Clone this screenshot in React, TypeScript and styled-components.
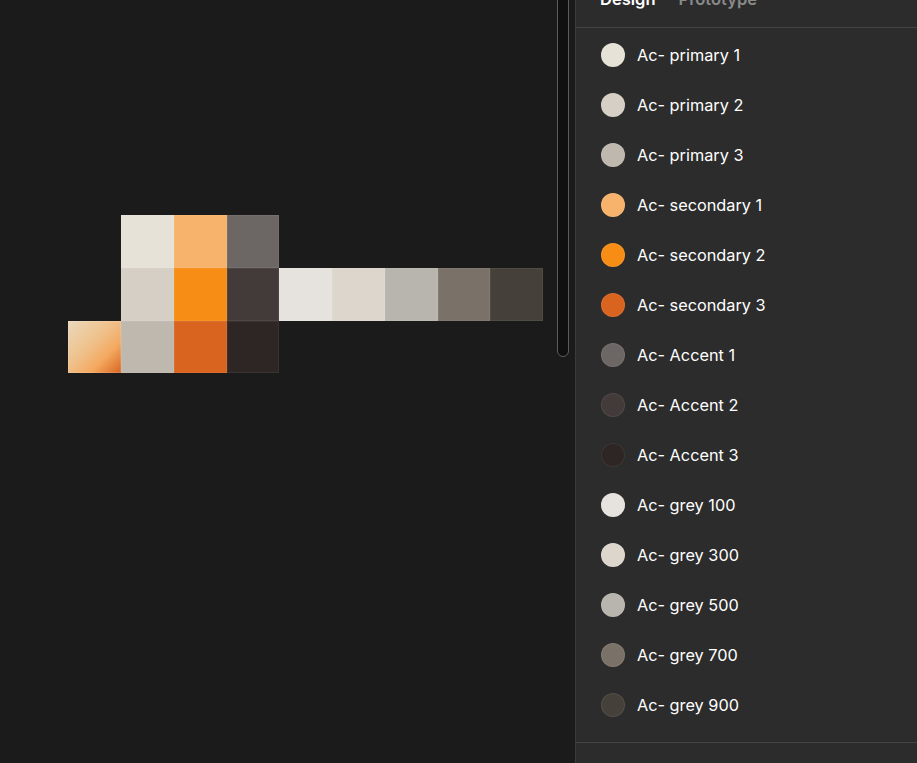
import React from "react";
import styled, { createGlobalStyle } from "styled-components";

const Global = createGlobalStyle`
  html, body { margin: 0; padding: 0; background: #1b1b1b; }
  body { font-family: Inter, "Noto Sans", sans-serif; overflow: hidden; }
  * { box-sizing: border-box; }
`;

const Page = styled.div`
  display: flex;
  width: 917px;
  height: 763px;
  overflow: hidden;
`;

const Canvas = styled.div`
  position: relative;
  width: 575px;
  flex: none;
  background: #1b1b1b;
  padding: 215px 0 0 68px;
`;

const Scroll = styled.div`
  position: absolute;
  left: 557px;
  top: -20px;
  width: 12px;
  height: 377px;
  border: 1px solid #5c5c5c;
  border-radius: 6px;
  background: #101010;
`;

const Grid = styled.div`
  display: grid;
  grid-template-columns: 53px 53px 53px 52px 53px 53px 53px 52px 53px;
  grid-template-rows: 53px 53px 52px;
`;

const Cell = styled.div<{ $c: string; $col: number; $row: number }>`
  grid-column: ${(p) => p.$col};
  grid-row: ${(p) => p.$row};
  background: ${(p) => p.$c};
  box-shadow: inset 0 0 0 1px rgba(255, 255, 255, 0.06);
`;

const GradientCell = styled.div`
  grid-column: 1;
  grid-row: 3;
  background: linear-gradient(135deg, #ead9bc 0%, #efc08a 45%, #f4a960 70%, #d8641f 100%);
  box-shadow: inset 0 0 0 1px rgba(255, 255, 255, 0.12);
`;

const Panel = styled.div`
  flex: 1;
  background: #2c2c2c;
  border-left: 1px solid #3b3b3b;
  display: flex;
  flex-direction: column;
`;

const Tabs = styled.div`
  height: 28px;
  border-bottom: 1px solid #444444;
  display: flex;
  gap: 23px;
  padding-left: 24px;
  align-items: flex-end;
  overflow: hidden;
`;

const Tab = styled.span<{ $active?: boolean }>`
  font-size: 16.5px;
  line-height: 20px;
  font-weight: 600;
  color: ${(p) => (p.$active ? "#ffffff" : "#8a8a8a")};
  margin-bottom: 18px;
`;

const List = styled.div`
  padding: 2px 0 12px;
  border-bottom: 1px solid #444444;
`;

const Row = styled.div`
  height: 50px;
  display: flex;
  align-items: center;
  padding-left: 25px;
  gap: 12px;
`;

const Dot = styled.div<{ $c: string }>`
  width: 24px;
  height: 24px;
  border-radius: 50%;
  background: ${(p) => p.$c};
  box-shadow: inset 0 0 0 1px rgba(255, 255, 255, 0.08);
  flex: none;
`;

const Label = styled.span`
  font-size: 16.3px;
  color: #ffffff;
`;

const styles: [string, string][] = [
  ["Ac- primary 1", "#e6e2d8"],
  ["Ac- primary 2", "#d6cfc6"],
  ["Ac- primary 3", "#bfb8ae"],
  ["Ac- secondary 1", "#f7b36b"],
  ["Ac- secondary 2", "#f78d15"],
  ["Ac- secondary 3", "#d8641f"],
  ["Ac- Accent 1", "#6c6764"],
  ["Ac- Accent 2", "#433b39"],
  ["Ac- Accent 3", "#2e2624"],
  ["Ac- grey 100", "#e6e3df"],
  ["Ac- grey 300", "#ddd6cc"],
  ["Ac- grey 500", "#b8b5ae"],
  ["Ac- grey 700", "#7a7168"],
  ["Ac- grey 900", "#45413a"],
];

const cells: [string, number, number][] = [
  ["#e6e2d8", 2, 1],
  ["#f7b36b", 3, 1],
  ["#6c6764", 4, 1],
  ["#d6cfc6", 2, 2],
  ["#f78d15", 3, 2],
  ["#433b39", 4, 2],
  ["#e6e3df", 5, 2],
  ["#ddd6cc", 6, 2],
  ["#b8b5ae", 7, 2],
  ["#7a7168", 8, 2],
  ["#45413a", 9, 2],
  ["#bfb8ae", 2, 3],
  ["#d8641f", 3, 3],
  ["#2e2624", 4, 3],
];

export default function App() {
  return (
    <Page>
      <Global />
      <Canvas>
        <Grid>
          {cells.map(([c, col, row]) => (
            <Cell key={c + col + row} $c={c} $col={col} $row={row} />
          ))}
          <GradientCell />
        </Grid>
        <Scroll />
      </Canvas>
      <Panel>
        <Tabs>
          <Tab $active>Design</Tab>
          <Tab>Prototype</Tab>
        </Tabs>
        <List>
          {styles.map(([name, c]) => (
            <Row key={name}>
              <Dot $c={c} />
              <Label>{name}</Label>
            </Row>
          ))}
        </List>
      </Panel>
    </Page>
  );
}
